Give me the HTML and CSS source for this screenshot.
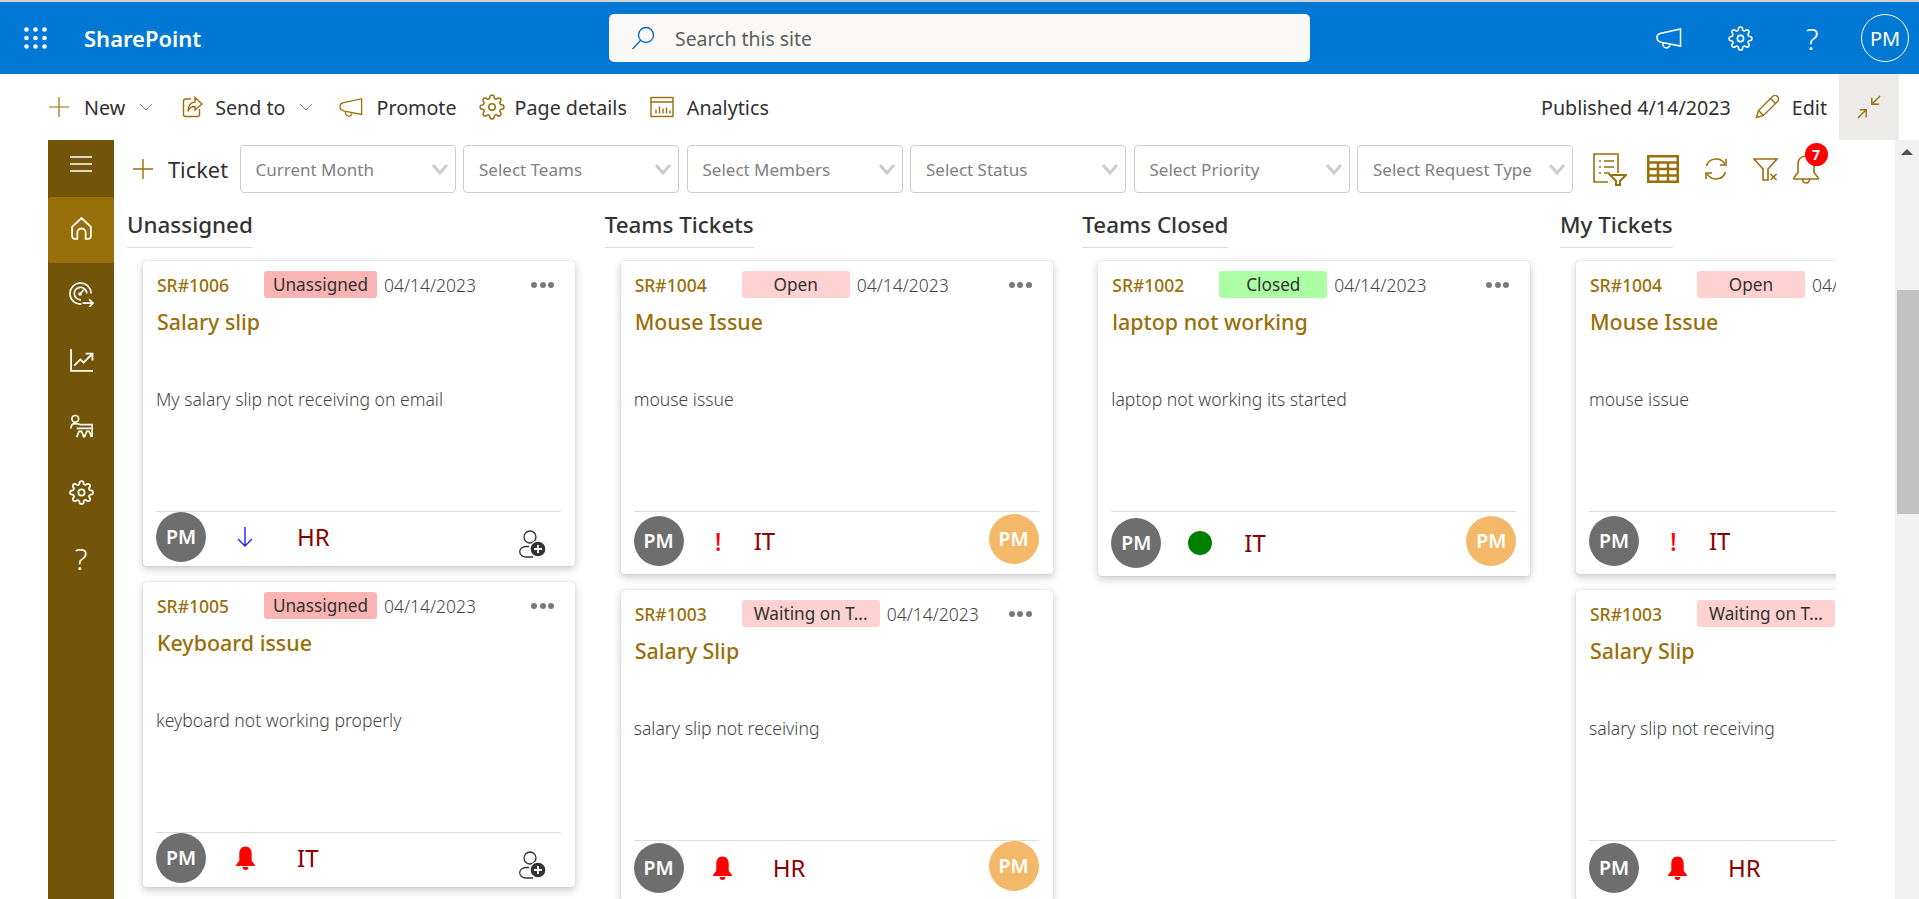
FILE: index.html
```html
<!DOCTYPE html>
<html lang="en">
<head>
  <meta charset="UTF-8">
  <meta name="viewport" content="width=device-width, initial-scale=1.0">
  <title>Helpdesk - SharePoint</title>
  <link rel="stylesheet" href="styles.css">
</head>
<body>
  <svg class="sprite" aria-hidden="true">
    <symbol id="i-gear" viewBox="0 0 24 24"><circle cx="12" cy="12" r="3"/><path d="M19.4 15a1.65 1.65 0 0 0 .33 1.82l.06.06a2 2 0 0 1 0 2.83 2 2 0 0 1-2.83 0l-.06-.06a1.65 1.65 0 0 0-1.82-.33 1.65 1.65 0 0 0-1 1.51V21a2 2 0 0 1-2 2 2 2 0 0 1-2-2v-.09A1.65 1.65 0 0 0 9 19.4a1.65 1.65 0 0 0-1.82.33l-.06.06a2 2 0 0 1-2.83 0 2 2 0 0 1 0-2.83l.06-.06a1.65 1.65 0 0 0 .33-1.82 1.65 1.65 0 0 0-1.51-1H3a2 2 0 0 1-2-2 2 2 0 0 1 2-2h.09A1.65 1.65 0 0 0 4.6 9a1.65 1.65 0 0 0-.33-1.82l-.06-.06a2 2 0 0 1 0-2.83 2 2 0 0 1 2.83 0l.06.06a1.65 1.65 0 0 0 1.82.33H9a1.65 1.65 0 0 0 1-1.51V3a2 2 0 0 1 2-2 2 2 0 0 1 2 2v.09a1.65 1.65 0 0 0 1 1.51 1.65 1.65 0 0 0 1.82-.33l.06-.06a2 2 0 0 1 2.83 0 2 2 0 0 1 0 2.83l-.06.06a1.65 1.65 0 0 0-.33 1.82V9a1.65 1.65 0 0 0 1.51 1H21a2 2 0 0 1 2 2 2 2 0 0 1-2 2h-.09a1.65 1.65 0 0 0-1.51 1z"/></symbol>
    <symbol id="i-megaphone" viewBox="0 0 26 22"><path d="M24.500 2v17L6 15.500Q1 14.500 1 10.500 1 7.500 4 6.500z"/><path d="M7 15.700v1.300a3.500 3.500 0 0 0 7 .8"/></symbol>
    <symbol id="i-plus" viewBox="0 0 20 20"><path d="M10 0v20M0 10h20"/></symbol>
    <symbol id="i-chev" viewBox="0 0 14 8"><path d="M1 1l6 6 6-6"/></symbol>
    <symbol id="i-select-chev" viewBox="0 0 18 12"><path d="M2 2l7 8 7-8"/></symbol>
    <symbol id="i-bell-fill" viewBox="0 0 22 24"><path d="M11 0c4.500 0 6.500 3.500 6.500 7.500v7.500l3.500 4.500v1H1v-1L4.500 15V7.500C4.500 3.500 6.500 0 11 0z"/><path d="M8 21.500h6a3 3 0 0 1-6 0z"/></symbol>
    <symbol id="i-assign" viewBox="0 0 30 28"><circle cx="13" cy="7" r="6"/><path d="M12 16.500H9a6 5 0 0 0 0 10.500h7"/><circle class="assign-dot" cx="21" cy="19" r="8"/><path class="assign-plus" d="M21 15v8M17 19h8"/></symbol>
    <symbol id="i-arrow-down" viewBox="0 0 18 22"><path d="M9 1v19M2 13l7 7 7-7"/></symbol>
  </svg>

  <header class="suite-bar">
    <svg class="waffle" viewBox="0 0 23 22">
      <g fill="#fff">
        <circle cx="2.500" cy="2.500" r="2.300"/><circle cx="11.500" cy="2.500" r="2.300"/><circle cx="20.500" cy="2.500" r="2.300"/>
        <circle cx="2.500" cy="11" r="2.300"/><circle cx="11.500" cy="11" r="2.300"/><circle cx="20.500" cy="11" r="2.300"/>
        <circle cx="2.500" cy="19.500" r="2.300"/><circle cx="11.500" cy="19.500" r="2.300"/><circle cx="20.500" cy="19.500" r="2.300"/>
      </g>
    </svg>
    <span class="suite-name">SharePoint</span>
    <div class="search-box">
      <svg class="search-icon" viewBox="0 0 24 24"><circle cx="15" cy="9" r="7.500"/><path d="M9.500 14.500L1.500 23"/></svg>
      <span>Search this site</span>
    </div>
    <div class="suite-actions">
      <svg class="suite-icon megaphone"><use href="#i-megaphone"/></svg>
      <svg class="suite-icon gear"><use href="#i-gear"/></svg>
      <span class="suite-help">?</span>
      <span class="suite-avatar">PM</span>
    </div>
  </header>

  <div class="command-bar">
    <button class="cmd cmd-new"><svg class="cmd-plus"><use href="#i-plus"/></svg>New<svg class="cmd-chev"><use href="#i-chev"/></svg></button>
    <button class="cmd cmd-send">
      <svg class="cmd-icon" viewBox="0 0 22 22"><path d="M9 3H3.500A2 2 0 0 0 1.500 5v13.500a2 2 0 0 0 2 2h12a2 2 0 0 0 2-2V13"/><path d="M13 1.500l7 6.500-7 6V10.500c-4 0-6 1.500-7 5 0-5.500 2.500-9 7-9.500z"/></svg>
      Send to<svg class="cmd-chev"><use href="#i-chev"/></svg>
    </button>
    <button class="cmd cmd-promote"><svg class="cmd-icon"><use href="#i-megaphone"/></svg>Promote</button>
    <button class="cmd cmd-details"><svg class="cmd-icon"><use href="#i-gear"/></svg>Page details</button>
    <button class="cmd cmd-analytics"><svg class="cmd-icon" viewBox="0 0 24 21"><rect x="1" y="1" width="22" height="19"/><path d="M1 5.500h22M6 17v-4M9.500 17v-7M13 17v-5M16.500 17v-6M20 17v-3"/></svg>Analytics</button>
    <div class="cmd-right">
      <span class="published">Published 4/14/2023</span>
      <button class="cmd cmd-edit"><svg class="cmd-icon" viewBox="0 0 24 24"><path d="M1.500 22.500l2-7L17.500 1.500a2.800 2.800 0 0 1 5 5L8.500 20.500zM3.500 15.500l5 5M15.500 3.500l5 5"/></svg>Edit</button>
      <button class="collapse-btn">
        <svg viewBox="0 0 26 26"><path d="M25 1l-9 9M16 3v7h8M1 25l9-9M3 16h7v8"/></svg>
      </button>
    </div>
  </div>

  <div class="workspace">
    <nav class="side-nav">
      <div class="nav-toggle"><svg viewBox="0 0 22 16"><path d="M0 1h22M0 8h22M0 15h22"/></svg></div>
      <div class="nav-item active"><svg viewBox="0 0 24 24"><path d="M3 10.500L12 2l9 8.500V19.500a2.500 2.500 0 0 1-2.500 2.500H16v-6a4 4 0 0 0-8 0v6H5.500A2.500 2.500 0 0 1 3 19.500z"/></svg></div>
      <div class="nav-item"><svg viewBox="0 0 26 26"><path d="M23 12a11 11 0 1 0-10 11"/><path d="M18.500 12a6.500 6.500 0 1 0-6 6.500"/><path d="M15.500 8l-3.500 4"/><circle cx="11.500" cy="12.500" r="1"/><path d="M14 22h11M21 18l4 4-4 4"/></svg></div>
      <div class="nav-item"><svg viewBox="0 0 24 24"><path d="M2 1v21h21M5 17l6-6 3 3 8-8M16 5.500h6.500V12"/></svg></div>
      <div class="nav-item"><svg viewBox="0 0 24 26"><circle cx="5.500" cy="5" r="3.500"/><path d="M1 15q0-5 4.500-5 3 0 5 1h12.500v13"/><path d="M7 15h15M7 24l2.500-6H12l2.500 6M15 24l2.500-6H20l2.500 6"/></svg></div>
      <div class="nav-item"><svg viewBox="0 0 24 24"><use href="#i-gear"/></svg></div>
      <div class="nav-item nav-help">?</div>
    </nav>

    <main class="main">
      <div class="toolbar">
        <button class="add-ticket"><svg><use href="#i-plus"/></svg>Ticket</button>
        <div class="filter">Current Month<svg><use href="#i-select-chev"/></svg></div>
        <div class="filter">Select Teams<svg><use href="#i-select-chev"/></svg></div>
        <div class="filter">Select Members<svg><use href="#i-select-chev"/></svg></div>
        <div class="filter">Select Status<svg><use href="#i-select-chev"/></svg></div>
        <div class="filter">Select Priority<svg><use href="#i-select-chev"/></svg></div>
        <div class="filter">Select Request Type<svg><use href="#i-select-chev"/></svg></div>
        <svg class="tool-icon tool-list" viewBox="0 0 34 33"><path d="M25 20V1H1v28h14M6 8h2M11 8h10M6 14h2M11 14h10M6 20h2M11 20h6"/><path class="tool-thick" d="M17 22h16l-6 6v4h-4v-4z"/></svg>
        <svg class="tool-icon tool-table" viewBox="0 0 32 28"><rect x="1.250" y="1.250" width="29.500" height="25.500"/><path d="M1 7.500h30M1 14h30M1 20.500h30M11 7.500V27M21 7.500V27"/></svg>
        <svg class="tool-icon tool-sync" viewBox="0 0 26 24"><path d="M3.500 9A10 10 0 0 1 22 7.500M22.500 15A10 10 0 0 1 4 16.500"/><path d="M23 2v6h-6M3 22v-6h6"/></svg>
        <svg class="tool-icon tool-clear" viewBox="0 0 26 23"><path d="M1 1h23l-9 10v11H10V11z"/><path d="M17.500 16l6 6M23.500 16l-6 6"/></svg>
        <div class="tool-bell">
          <svg class="tool-icon" viewBox="0 0 26 29"><path d="M13 1c5 0 8 3.500 8 8.500v8l4 5v1.500H1v-1.500l4-5v-8C5 4.500 8 1 13 1zM9.500 24.500a3.500 3.500 0 0 0 7 0"/></svg>
          <span class="bell-count">7</span>
        </div>
      </div>

      <div class="board">
        <section class="column">
          <h2 class="column-title">Unassigned</h2>
          <article class="card">
            <div class="card-body">
              <div class="card-top"><span class="sr">SR#1006</span><span class="badge badge-unassigned">Unassigned</span><span class="date">04/14/2023</span><span class="dots"><i></i><i></i><i></i></span></div>
              <h3 class="card-title">Salary slip</h3>
              <p class="card-desc">My salary slip not receiving on email</p>
            </div>
            <div class="card-foot foot-unassigned">
              <span class="avatar">PM</span>
              <span class="prio"><svg class="prio-arrow"><use href="#i-arrow-down"/></svg></span>
              <span class="team team-wide">HR</span>
              <svg class="assign"><use href="#i-assign"/></svg>
            </div>
          </article>
          <article class="card">
            <div class="card-body">
              <div class="card-top"><span class="sr">SR#1005</span><span class="badge badge-unassigned">Unassigned</span><span class="date">04/14/2023</span><span class="dots"><i></i><i></i><i></i></span></div>
              <h3 class="card-title">Keyboard issue</h3>
              <p class="card-desc">keyboard not working properly</p>
            </div>
            <div class="card-foot foot-unassigned">
              <span class="avatar">PM</span>
              <span class="prio"><svg class="prio-bell"><use href="#i-bell-fill"/></svg></span>
              <span class="team team-wide">IT</span>
              <svg class="assign"><use href="#i-assign"/></svg>
            </div>
          </article>
        </section>

        <section class="column">
          <h2 class="column-title">Teams Tickets</h2>
          <article class="card">
            <div class="card-body">
              <div class="card-top"><span class="sr">SR#1004</span><span class="badge badge-open">Open</span><span class="date">04/14/2023</span><span class="dots"><i></i><i></i><i></i></span></div>
              <h3 class="card-title">Mouse Issue</h3>
              <p class="card-desc">mouse issue</p>
            </div>
            <div class="card-foot foot-open">
              <span class="avatar">PM</span>
              <span class="prio prio-urgent">!</span>
              <span class="team team-narrow">IT</span>
              <span class="avatar avatar-owner">PM</span>
            </div>
          </article>
          <article class="card">
            <div class="card-body">
              <div class="card-top"><span class="sr">SR#1003</span><span class="badge badge-waiting">Waiting on T...</span><span class="date">04/14/2023</span><span class="dots"><i></i><i></i><i></i></span></div>
              <h3 class="card-title">Salary Slip</h3>
              <p class="card-desc">salary slip not receiving</p>
            </div>
            <div class="card-foot foot-waiting">
              <span class="avatar">PM</span>
              <span class="prio"><svg class="prio-bell"><use href="#i-bell-fill"/></svg></span>
              <span class="team">HR</span>
              <span class="avatar avatar-owner">PM</span>
            </div>
          </article>
        </section>

        <section class="column">
          <h2 class="column-title">Teams Closed</h2>
          <article class="card">
            <div class="card-body">
              <div class="card-top"><span class="sr">SR#1002</span><span class="badge badge-closed">Closed</span><span class="date">04/14/2023</span><span class="dots"><i></i><i></i><i></i></span></div>
              <h3 class="card-title">laptop not working</h3>
              <p class="card-desc">laptop not working its started</p>
            </div>
            <div class="card-foot foot-closed">
              <span class="avatar">PM</span>
              <span class="prio"><i class="prio-done"></i></span>
              <span class="team team-mid">IT</span>
              <span class="avatar avatar-owner">PM</span>
            </div>
          </article>
        </section>

        <section class="column">
          <h2 class="column-title">My Tickets</h2>
          <article class="card">
            <div class="card-body">
              <div class="card-top"><span class="sr">SR#1004</span><span class="badge badge-open">Open</span><span class="date">04/14/2023</span><span class="dots"><i></i><i></i><i></i></span></div>
              <h3 class="card-title">Mouse Issue</h3>
              <p class="card-desc">mouse issue</p>
            </div>
            <div class="card-foot foot-open">
              <span class="avatar">PM</span>
              <span class="prio prio-urgent">!</span>
              <span class="team team-narrow">IT</span>
              <span class="avatar avatar-owner">PM</span>
            </div>
          </article>
          <article class="card">
            <div class="card-body">
              <div class="card-top"><span class="sr">SR#1003</span><span class="badge badge-waiting">Waiting on T...</span><span class="date">04/14/2023</span><span class="dots"><i></i><i></i><i></i></span></div>
              <h3 class="card-title">Salary Slip</h3>
              <p class="card-desc">salary slip not receiving</p>
            </div>
            <div class="card-foot foot-waiting">
              <span class="avatar">PM</span>
              <span class="prio"><svg class="prio-bell"><use href="#i-bell-fill"/></svg></span>
              <span class="team">HR</span>
              <span class="avatar avatar-owner">PM</span>
            </div>
          </article>
        </section>
      </div>
    </main>

    <div class="scrollbar"><span class="scroll-up"></span><span class="scroll-thumb"></span></div>
  </div>
</body>
</html>
```

FILE: styles.css
```css
* {
  box-sizing: border-box;
}

html, body {
  height: 100%;
}

body {
  margin: 0;
  overflow: hidden;
  display: flex;
  flex-direction: column;
  background-color: #fff;
  color: #323130;
  font-family: "Noto Sans", "Open Sans", sans-serif;
}

button {
  border: 0;
  padding: 0;
  background: none;
  font: inherit;
  color: inherit;
}

.sprite {
  display: none;
}

/* suite bar */
.suite-bar {
  flex: none;
  height: 74px;
  border-top: 2px solid #d2d2d2;
  background-color: #0078d4;
  color: #fff;
  display: flex;
  align-items: center;
  padding-left: 24px;
}

.waffle {
  width: 23px;
  height: 22px;
  flex: none;
}

.suite-name {
  margin-left: 37px;
  width: 141px;
  font-size: 22px;
  font-weight: 600;
}

.search-box {
  width: 701px;
  height: 48px;
  margin-left: 384px;
  background-color: #faf9f8;
  border-radius: 5px;
  display: flex;
  align-items: center;
  padding-left: 22px;
  color: #605e5c;
  font-size: 19.400px;
}

.search-icon {
  width: 24px;
  height: 24px;
  margin-right: 20px;
  fill: none;
  stroke: #0f6cbd;
  stroke-width: 1.4;
}

.suite-actions {
  margin-left: 346px;
  display: flex;
  align-items: center;
}

.suite-icon {
  fill: none;
  stroke: #fff;
  stroke-width: 1.5;
}

.megaphone {
  width: 26px;
  height: 22px;
}

.gear {
  width: 25px;
  height: 25px;
  margin-left: 46px;
}

.suite-help {
  width: 16px;
  margin-left: 51px;
  font-size: 30px;
  font-weight: 300;
  text-align: center;
}

.suite-avatar {
  width: 48px;
  height: 48px;
  margin-left: 41px;
  border: 1px solid #fff;
  border-radius: 50%;
  display: flex;
  align-items: center;
  justify-content: center;
  font-size: 20px;
}

/* command bar */
.command-bar {
  flex: none;
  height: 66px;
  display: flex;
  align-items: center;
  padding-left: 49px;
  font-size: 19.700px;
}

.cmd {
  display: flex;
  align-items: center;
  white-space: nowrap;
}

.cmd-plus {
  width: 20px;
  height: 20px;
  margin-right: 15px;
  fill: none;
  stroke: #996f0a;
  stroke-width: 1.2;
}

.cmd-chev {
  width: 14px;
  height: 8px;
  margin-left: 14px;
  fill: none;
  stroke: #8a8886;
  stroke-width: 1;
}

.cmd-icon {
  width: 24px;
  height: 22px;
  margin-right: 13px;
  fill: none;
  stroke: #996f0a;
  stroke-width: 1.4;
  flex: none;
}

.cmd-send {
  margin-left: 28px;
}

.cmd-send .cmd-icon {
  width: 24px;
  margin-right: 10px;
}

.cmd-promote {
  margin-left: 26px;
}

.cmd-details {
  margin-left: 22px;
}

.cmd-details .cmd-icon {
  width: 26px;
  height: 26px;
  margin-right: 10px;
}

.cmd-analytics {
  margin-left: 23px;
}

.cmd-right {
  margin-left: auto;
  display: flex;
  align-items: center;
  height: 100%;
  padding-right: 20px;
}

.published {
  margin-right: 24px;
}

.cmd-edit .cmd-icon {
  height: 24px;
}

.collapse-btn {
  width: 60px;
  height: 66px;
  margin-left: 12px;
  background-color: #edebe9;
  display: flex;
  align-items: center;
  justify-content: center;
}

.collapse-btn svg {
  width: 24px;
  height: 24px;
  fill: none;
  stroke: #996f0a;
  stroke-width: 1.5;
}

/* sidebar */
.workspace {
  flex: 1;
  min-height: 0;
  display: flex;
  padding-left: 48px;
}

.side-nav {
  flex: none;
  width: 66px;
  background-color: #725508;
  color: #fff;
}

.nav-toggle {
  height: 57px;
  display: flex;
  align-items: center;
  justify-content: center;
  padding-bottom: 10px;
}

.nav-toggle svg {
  width: 22px;
  height: 16px;
  fill: none;
  stroke: #fff;
  stroke-width: 1.3;
}

.nav-item {
  height: 66px;
  display: flex;
  align-items: center;
  justify-content: center;
  padding-bottom: 4px;
  border-radius: 3px;
}

.nav-item.active {
  background-color: #996f0a;
}

.nav-item svg {
  width: 25px;
  height: 25px;
  fill: none;
  stroke: #fff;
  stroke-width: 1.7;
}

.nav-help {
  font-size: 30px;
  font-weight: 300;
}

/* main area */
.main {
  flex: 1;
  min-width: 0;
  padding-right: 59px;
}

.toolbar {
  height: 57px;
  display: flex;
  align-items: center;
  gap: 7.5px;
  padding: 5px 0 4px 19px;
}

.add-ticket {
  width: 99px;
  flex: none;
  display: flex;
  align-items: center;
  font-size: 21.800px;
}

.add-ticket svg {
  width: 20px;
  height: 20px;
  margin-right: 15px;
  fill: none;
  stroke: #996f0a;
  stroke-width: 1.4;
}

.filter {
  flex: none;
  width: 216px;
  height: 48px;
  border: 1px solid #ccc;
  border-radius: 4px;
  display: flex;
  align-items: center;
  justify-content: space-between;
  padding: 0 6px 0 15px;
  color: #808080;
  font-size: 17px;
  white-space: nowrap;
}

.filter svg {
  width: 18px;
  height: 12px;
  flex: none;
  fill: none;
  stroke: #ccc;
  stroke-width: 3;
}

.tool-icon {
  flex: none;
  fill: none;
  stroke: #996f0a;
  stroke-width: 1.6;
}

.tool-list {
  width: 34px;
  height: 33px;
  margin-left: 12px;
}

.tool-thick {
  stroke-width: 2;
}

.tool-table {
  width: 32px;
  height: 28px;
  margin-left: 13px;
  stroke-width: 2.500;
}

.tool-sync {
  width: 26px;
  height: 24px;
  margin-left: 16px;
}

.tool-clear {
  width: 26px;
  height: 23px;
  margin-left: 17px;
}

.tool-bell {
  position: relative;
  margin-left: 6px;
  width: 26px;
  height: 29px;
}

.tool-bell .tool-icon {
  width: 26px;
  height: 29px;
}

.bell-count {
  position: absolute;
  top: -12px;
  left: 12px;
  width: 23px;
  height: 23px;
  border-radius: 50%;
  background-color: #f00;
  color: #fff;
  font-size: 14px;
  font-weight: 700;
  line-height: 23px;
  text-align: center;
}

/* board */
.board {
  display: grid;
  grid-auto-flow: column;
  grid-auto-columns: 477.670px;
  padding-left: 13px;
  overflow: hidden;
  height: 702px;
}

.column {
  min-width: 0;
}

.column-title {
  display: table;
  margin: 0 0 13px;
  height: 51px;
  padding-top: 8px;
  border-bottom: 1px solid #ddd;
  font-size: 22.400px;
  font-weight: 500;
  line-height: 40px;
  color: #333;
}

.card {
  width: 432px;
  margin: 0 0 16px 16px;
  padding: 0 14px 0 13px;
  background-color: #fff;
  border-radius: 3px;
  box-shadow: 0 0 1px rgba(0, 0, 0, 0.3), 0 3px 9px rgba(0, 0, 0, 0.22);
}

.card-body {
  height: 250px;
  padding-top: 10px;
}

.card-top {
  display: flex;
  align-items: center;
  height: 27px;
}

.sr {
  width: 108px;
  padding-left: 1px;
  color: #996f0a;
  font-size: 17.500px;
  font-weight: 500;
}

.badge {
  height: 27px;
  margin-right: 7px;
  border-radius: 3px;
  font-size: 17.200px;
  line-height: 27px;
  text-align: center;
  white-space: nowrap;
}

.badge-unassigned {
  width: 113px;
  background-color: #fab4b4;
}

.badge-open {
  width: 108px;
  background-color: #ffd2d2;
}

.badge-waiting {
  width: 138px;
  background-color: #ffd2d2;
}

.badge-closed {
  width: 108px;
  background-color: #adffa6;
}

.date {
  color: #444;
  font-size: 17.500px;
  font-weight: 300;
  white-space: nowrap;
}

.dots {
  margin-left: auto;
  margin-right: 7px;
  display: flex;
  gap: 2.500px;
}

.dots i {
  width: 6px;
  height: 6px;
  border-radius: 50%;
  background-color: #7a7a7a;
}

.card-title {
  margin: 9px 0 0;
  padding-left: 1px;
  color: #996f0a;
  font-size: 21.400px;
  font-weight: 500;
  line-height: 30px;
}

.card-desc {
  margin: 51px 0 0;
  color: #444;
  font-size: 17.600px;
  font-weight: 300;
  line-height: 22px;
}

/* card footer, its height and the avatar offset change by ticket state */
.card-foot {
  display: flex;
  align-items: flex-start;
  border-top: 1px solid #ddd;
}

.foot-unassigned {
  height: 55px;
}

.foot-open {
  height: 63px;
  padding-top: 4px;
}

.foot-waiting {
  height: 60px;
  padding-top: 2px;
}

.foot-closed {
  height: 65px;
  padding-top: 6px;
}

.avatar {
  flex: none;
  width: 50px;
  height: 50px;
  border-radius: 50%;
  background-color: #6e6e6e;
  color: #fff;
  font-size: 19.500px;
  font-weight: 600;
  line-height: 50px;
  text-align: center;
}

.avatar-owner {
  margin-left: auto;
  background-color: #f4b968;
}

.foot-open .avatar-owner,
.foot-closed .avatar-owner,
.foot-waiting .avatar-owner {
  margin-top: -2px;
}

.prio {
  flex: none;
  width: 24px;
  height: 30px;
  margin: 10px 0 0 27px;
  display: flex;
  align-items: center;
  justify-content: center;
}

.prio-arrow {
  width: 18px;
  height: 22px;
  fill: none;
  stroke: #2222ee;
  stroke-width: 1.4;
}

.prio-bell {
  width: 21px;
  height: 24px;
  fill: #f00;
}

.prio-urgent {
  justify-content: flex-start;
  padding-left: 4px;
  color: #f00;
  font-size: 25px;
  font-weight: 500;
}

.prio-done {
  width: 24px;
  height: 24px;
  border-radius: 50%;
  background-color: #008000;
}

.team {
  margin: 10px 0 0 38px;
  color: #8b0000;
  font-size: 24px;
  line-height: 30px;
}

.team-wide {
  margin-left: 40px;
}

.team-narrow {
  margin-left: 19px;
}

.team-mid {
  margin-left: 32px;
}

.assign {
  width: 30px;
  height: 28px;
  margin: 18px 14px 0 auto;
  fill: none;
  stroke: #333;
  stroke-width: 1.3;
}

.assign-dot {
  fill: #333;
  stroke: #fff;
}

.assign-plus {
  stroke: #fff;
  stroke-width: 1.8;
}

/* page scrollbar */
.scrollbar {
  flex: none;
  width: 24px;
  margin-left: auto;
  background-color: #f1f1f1;
  position: relative;
}

.scroll-up {
  position: absolute;
  top: 9px;
  left: 6px;
  border-left: 6px solid transparent;
  border-right: 6px solid transparent;
  border-bottom: 6px solid #505050;
}

.scroll-thumb {
  position: absolute;
  top: 150px;
  left: 2px;
  right: 0;
  height: 224px;
  background-color: #c1c1c1;
}
```
